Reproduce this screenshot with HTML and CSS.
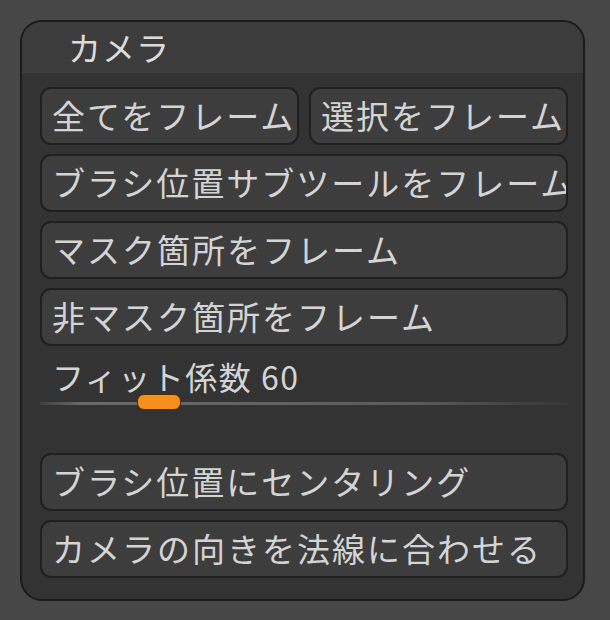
FILE: index.html
```html
<!DOCTYPE html>
<html lang="ja">
<head>
<meta charset="utf-8">
<link rel="stylesheet" href="styles.css">
</head>
<body>
<div class="panel">
  <div class="header">カメラ</div>
  <div class="content">
    <div class="row two">
      <div class="btn">全てをフレーム</div>
      <div class="btn">選択をフレーム</div>
    </div>
    <div class="row"><div class="btn">ブラシ位置サブツールをフレーム</div></div>
    <div class="row"><div class="btn">マスク箇所をフレーム</div></div>
    <div class="row"><div class="btn">非マスク箇所をフレーム</div></div>
    <div class="slider">
      <div class="slider-label">フィット係数 60</div>
      <div class="track"><div class="handle"></div></div>
    </div>
    <div class="row"><div class="btn">ブラシ位置にセンタリング</div></div>
    <div class="row"><div class="btn">カメラの向きを法線に合わせる</div></div>
  </div>
</div>
</body>
</html>
```
FILE: styles.css
```css
html, body {
  margin: 0;
  padding: 0;
  background: #474747;
  width: 610px;
  height: 620px;
  overflow: hidden;
  font-family: "Noto Sans CJK JP", "Noto Sans", sans-serif;
  color: #d4d4d4;
}
.panel {
  box-sizing: border-box;
  margin: 20px 0 0 20px;
  width: 565px;
  height: 581px;
  border: 2px solid #1b1b1b;
  border-radius: 22px;
  background: #333333;
  overflow: hidden;
  display: flex;
  flex-direction: column;
}
.header {
  height: 51px;
  background: #3c3c3c;
  padding-left: 46px;
  font-size: 33px;
  line-height: 51px;
  letter-spacing: 1px;
  color: #dcdcdc;
}
.content {
  padding: 14px 15px 0 18px;
  display: flex;
  flex-direction: column;
  gap: 9px;
}
.row {
  display: flex;
  gap: 10px;
}
.btn {
  flex: 1;
  min-width: 0;
  box-sizing: border-box;
  height: 58px;
  border: 2px solid #1f1f1f;
  border-radius: 11px;
  background: #3d3d3d;
  padding-left: 10px;
  font-size: 33px;
  line-height: 52px;
  white-space: nowrap;
  overflow: hidden;
  letter-spacing: 2px;
}
.slider {
  height: 88px;
  margin-top: 1px;
}
.slider-label {
  padding-left: 12px;
  font-size: 32px;
  line-height: 40px;
  letter-spacing: 1.5px;
}
.track {
  position: relative;
  margin-top: 6px;
  height: 3px;
  background: linear-gradient(to right, rgba(110,110,110,0.2), #6a6a6a 8%, #5c5c5c 70%, rgba(90,90,90,0.1));
}
.handle {
  position: absolute;
  left: 97px;
  top: -8px;
  width: 44px;
  height: 16px;
  box-sizing: border-box;
  border: 1px solid #4a2c08;
  border-radius: 7px;
  background: #f68f1b;
}
```
